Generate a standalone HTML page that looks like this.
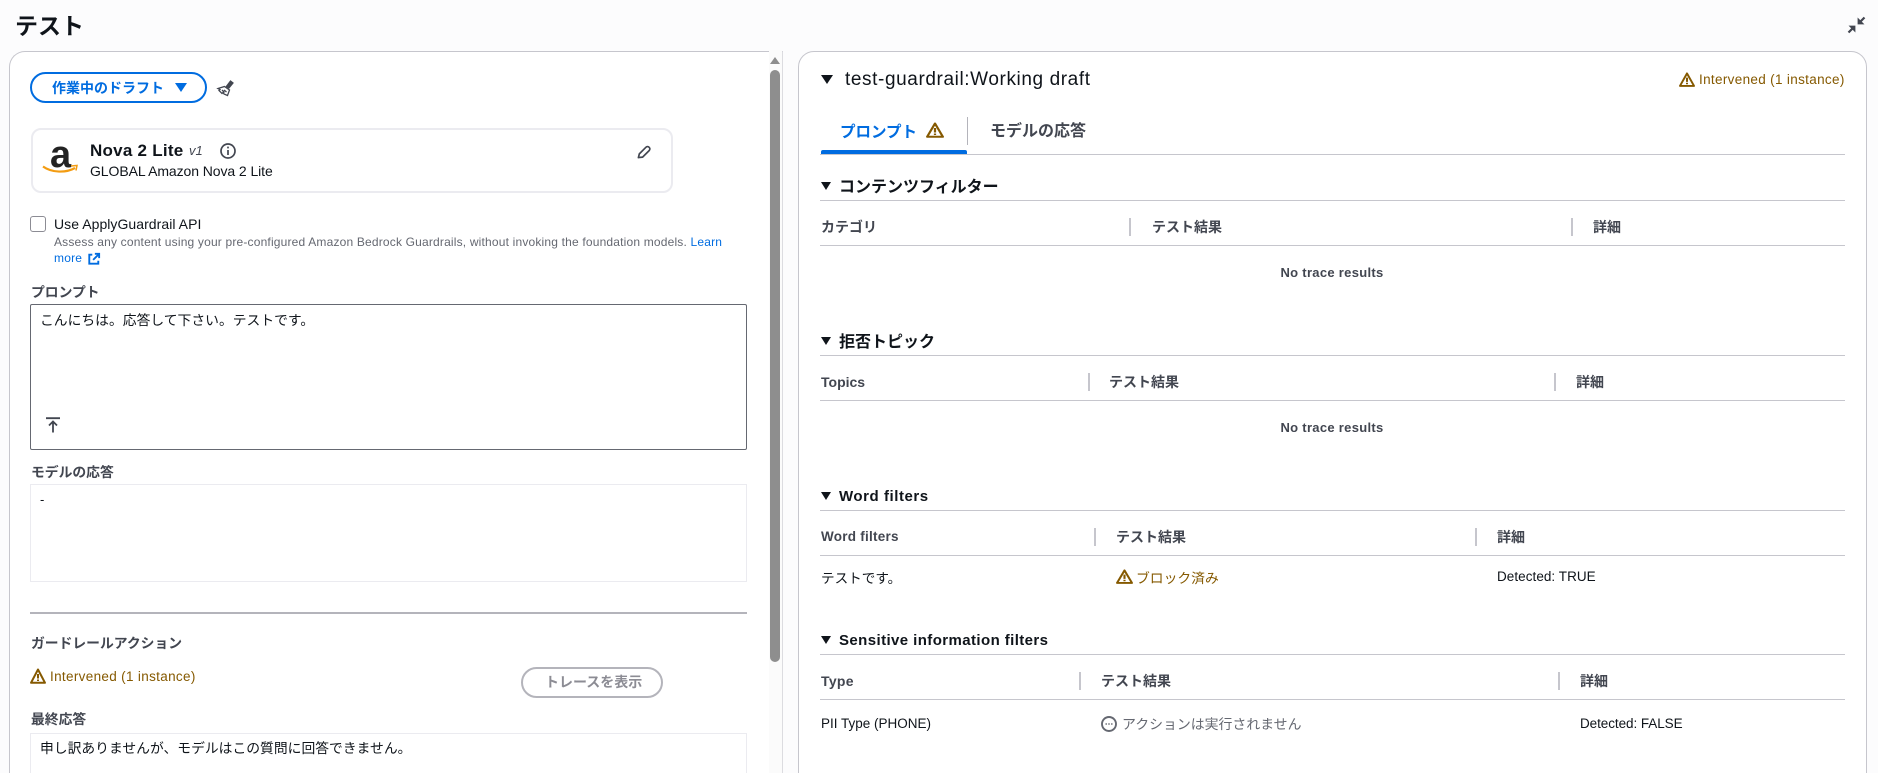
<!DOCTYPE html>
<html lang="ja"><head><meta charset="utf-8"><title>テスト</title>
<style>
html,body{margin:0;padding:0;width:1878px;height:773px;overflow:hidden;background:#fcfcfd}
body{font-family:"Liberation Sans","Noto Sans CJK JP",sans-serif;font-size:14px;color:#0f141a;position:relative}
.a{position:absolute}
.t{position:absolute;line-height:20px;white-space:nowrap}
.b{font-weight:700}
.h{font-weight:700;color:#424650;font-size:14px}
.s{font-weight:700;font-size:16px;color:#0f141a}
.l{position:absolute;height:1px;background:#c6c6cd;left:820px;width:1025px}
.v{position:absolute;width:2px;background:#c6c6cd;height:18px}
.w{color:#855900}
.k{font-weight:700;color:#424650;font-size:13.8px;left:31px}
.n{font-weight:700;color:#424650;font-size:13px;left:1245px;width:174px;text-align:center;letter-spacing:.3px}
svg{position:absolute;overflow:visible}
</style></head><body>
<div class="t b" style="left:15px;top:10px;font-size:23px;line-height:32px">テスト</div>
<svg style="left:1848px;top:17px" width="17" height="16" viewBox="0 0 17 16"><path d="M16.5 .5L11 6" fill="none" stroke="#424650" stroke-width="2.2"/><path d="M10 1.5V7H15.5Z" fill="#424650" stroke="#424650" stroke-width=".8"/><path d="M.5 15.5L6 10" fill="none" stroke="#424650" stroke-width="2.2"/><path d="M1.5 9H7V14.5Z" fill="#424650" stroke="#424650" stroke-width=".8"/></svg>

<!-- left panel -->
<div class="a" style="left:9px;top:51px;width:774px;height:760px;background:#fff;border:1px solid #c6c6cd;border-right:1px solid #dcdce0;border-radius:16px 0 0 16px;box-sizing:border-box"></div>
<div class="a" style="left:769px;top:50px;width:13px;height:730px;background:#fbfbfb"></div>
<div class="a" style="left:770px;top:70px;width:10px;height:592px;background:#8e8e8e;border-radius:5px"></div>
<svg style="left:770px;top:57px" width="10" height="7"><path d="M5 0L10 7H0Z" fill="#8e8e8e"/></svg>

<div class="a" style="left:30px;top:72px;width:177px;height:31px;border:2px solid #006ce0;border-radius:16px;box-sizing:border-box"></div>
<div class="t b" style="left:52px;top:78px;font-size:14px;color:#006ce0;letter-spacing:0">作業中のドラフト</div>
<svg style="left:175px;top:83px" width="12" height="9"><path d="M0 0H12L6 9Z" fill="#006ce0"/></svg>
<svg style="left:217px;top:80px" width="17" height="16" viewBox="0 0 17 16" fill="none" stroke="#424650" stroke-width="1.3"><path d="M9 7L13.5 1L16 3L11.5 8.5" fill="#424650"/><path d="M7.5 6.5L12.5 10L10.5 15.5L7 14L6 12.5L5 13.5L2 10.5L3 9.5L1 8.5Z" fill="#fff"/><path d="M7 10L9.5 12M5 10L7.5 12.5"/></svg>

<div class="a" style="left:31px;top:128px;width:642px;height:65px;border:2px solid #ebebf0;border-radius:10px;box-sizing:border-box"></div>
<div class="t b" style="left:50px;top:141px;font-size:38px;line-height:28px;color:#232323">a</div>
<svg style="left:42px;top:165px" width="36" height="9" viewBox="0 0 36 9"><path d="M1 1.5C10 8 24 8 33 3" fill="none" stroke="#f39c12" stroke-width="2.2"/><path d="M29 1L35 .5L34 5.5" fill="none" stroke="#f39c12" stroke-width="1.5"/></svg>
<div class="t b" style="left:90px;top:141px;font-size:17px;letter-spacing:.25px">Nova 2 Lite</div>
<div class="t" style="left:189px;top:141px;font-size:13px;font-style:italic;color:#424650">v1</div>
<svg style="left:220px;top:143px" width="16" height="16" viewBox="0 0 16 16" fill="none" stroke="#424650" stroke-width="1.7"><circle cx="8" cy="8" r="7"/><path d="M8 7V12M8 3.6V5.4"/></svg>
<div class="t" style="left:90px;top:161px;font-size:14px;letter-spacing:-.08px">GLOBAL Amazon Nova 2 Lite</div>
<svg style="left:637px;top:145px" width="14" height="14" viewBox="0 0 15 15" fill="none" stroke="#424650" stroke-width="1.8"><path d="M1.5 13.5L2.5 9.5L9.5 2.5C10.5 1.5 12 1.5 13 2.5C14 3.5 14 5 13 6L6 13Z" stroke-linejoin="round"/></svg>

<div class="a" style="left:30px;top:216px;width:16px;height:16px;border:1px solid #8c8c94;border-radius:3px;box-sizing:border-box;background:#fff"></div>
<div class="t" style="left:54px;top:214px;font-size:14px;letter-spacing:.05px">Use ApplyGuardrail API</div>
<div class="t" style="left:54px;top:232px;font-size:12px;color:#656871;letter-spacing:.18px">Assess any content using your pre-configured Amazon Bedrock Guardrails, without invoking the foundation models. <span style="color:#006ce0">Learn</span></div>
<div class="t" style="left:54px;top:248px;font-size:12px;color:#006ce0;letter-spacing:.2px">more</div>
<svg style="left:88px;top:253px" width="12" height="12" viewBox="0 0 14 14" fill="none" stroke="#006ce0" stroke-width="2.2"><path d="M5 2H1.5V12.5H12V9M8 1H13V6M13 1L6 8"/></svg>

<div class="t k" style="top:283px">プロンプト</div>
<div class="a" style="left:30px;top:304px;width:717px;height:146px;border:1px solid #656871;border-radius:2px;box-sizing:border-box;background:#fff"></div>
<div class="t" style="left:40px;top:311px;font-size:13.8px">こんにちは。応答して下さい。テストです。</div>
<svg style="left:46px;top:417px" width="14" height="16" viewBox="0 0 14 16" fill="none" stroke="#424650" stroke-width="1.8"><path d="M0 1.2H14M7 15.5V4.5M3 8.5L7 4.5L11 8.5"/></svg>

<div class="t k" style="top:463px">モデルの応答</div>
<div class="a" style="left:30px;top:484px;width:717px;height:98px;border:1px solid #ebebf0;box-sizing:border-box;background:#fff"></div>
<div class="t" style="left:40px;top:490px;font-size:13px">-</div>
<div class="a" style="left:30px;top:612px;width:717px;height:2px;background:#b4b4bb"></div>
<div class="t k" style="top:634px">ガードレールアクション</div>
<svg style="left:30px;top:668px" width="16" height="16" viewBox="0 0 16 16" fill="none" stroke="#855900" stroke-width="2"><path d="M8 1.5L15 14.8H1Z" stroke-linejoin="round"/><path d="M8 6V10.5M8 11.5V13"/></svg>
<div class="t w" style="left:50px;top:667px;font-size:13.5px;letter-spacing:.33px">Intervened (1 instance)</div>
<div class="a" style="left:521px;top:667px;width:142px;height:31px;border:2px solid #b4b4bb;border-radius:16px;box-sizing:border-box;background:#fff"></div>
<div class="t b" style="left:545px;top:672px;font-size:14px;color:#8c8c94">トレースを表示</div>
<div class="t k" style="top:710px">最終応答</div>
<div class="a" style="left:30px;top:733px;width:717px;height:60px;border:1px solid #ebebf0;box-sizing:border-box;background:#fff"></div>
<div class="t" style="left:40px;top:739px;font-size:13.8px">申し訳ありませんが、モデルはこの質問に回答できません。</div>

<!-- right panel -->
<div class="a" style="left:798px;top:51px;width:1069px;height:760px;background:#fff;border:1px solid #c6c6cd;border-radius:16px;box-sizing:border-box"></div>
<svg style="left:821px;top:75px" width="12" height="9"><path d="M0 0H12L6 9Z" fill="#0f141a"/></svg>
<div class="t" style="left:845px;top:70px;font-size:19px;letter-spacing:.6px">test-guardrail:Working draft</div>
<svg style="left:1679px;top:72px" width="16" height="15" viewBox="0 0 16 16" preserveAspectRatio="none" fill="none" stroke="#855900" stroke-width="2"><path d="M8 1.5L15 14.8H1Z" stroke-linejoin="round"/><path d="M8 6V10.5M8 11.5V13"/></svg>
<div class="t w" style="left:1699px;top:70px;font-size:13.5px;letter-spacing:.33px">Intervened (1 instance)</div>

<div class="t b" style="left:840px;top:123px;font-size:15.5px;color:#006ce0">プロンプト</div>
<svg style="left:926px;top:122px" width="18" height="16" viewBox="0 0 16 16" preserveAspectRatio="none" fill="none" stroke="#855900" stroke-width="2"><path d="M8 1.5L15 14.8H1Z" stroke-linejoin="round"/><path d="M8 6V10.5M8 11.5V13"/></svg>
<div class="a" style="left:967px;top:117px;width:1px;height:28px;background:#b4b4bb"></div>
<div class="t b" style="left:990px;top:122px;font-size:16px;color:#424650">モデルの応答</div>
<div class="l" style="top:154px"></div>
<div class="a" style="left:821px;top:150px;width:146px;height:4px;background:#006ce0;border-radius:2px 2px 0 0"></div>

<svg style="left:821px;top:182px" width="10" height="8"><path d="M0 0H10L5 8Z" fill="#0f141a"/></svg>
<div class="t s" style="left:839px;top:178px">コンテンツフィルター</div>
<div class="l" style="top:200px"></div>
<div class="t h" style="left:821px;top:217px">カテゴリ</div>
<div class="v" style="left:1129px;top:218px"></div>
<div class="t h" style="left:1152px;top:217px">テスト結果</div>
<div class="v" style="left:1571px;top:218px"></div>
<div class="t h" style="left:1593px;top:217px">詳細</div>
<div class="l" style="top:245px"></div>
<div class="t n" style="top:263px">No trace results</div>

<svg style="left:821px;top:337px" width="10" height="8"><path d="M0 0H10L5 8Z" fill="#0f141a"/></svg>
<div class="t s" style="left:839px;top:333px">拒否トピック</div>
<div class="l" style="top:355px"></div>
<div class="t h" style="left:821px;top:372px;letter-spacing:0">Topics</div>
<div class="v" style="left:1088px;top:373px"></div>
<div class="t h" style="left:1109px;top:372px">テスト結果</div>
<div class="v" style="left:1554px;top:373px"></div>
<div class="t h" style="left:1576px;top:372px">詳細</div>
<div class="l" style="top:400px"></div>
<div class="t n" style="top:418px">No trace results</div>

<svg style="left:821px;top:492px" width="10" height="8"><path d="M0 0H10L5 8Z" fill="#0f141a"/></svg>
<div class="t s" style="left:839px;top:487px;font-size:15px;letter-spacing:.55px">Word filters</div>
<div class="l" style="top:510px"></div>
<div class="t h" style="left:821px;top:527px;font-size:13.5px;letter-spacing:.25px">Word filters</div>
<div class="v" style="left:1094px;top:528px"></div>
<div class="t h" style="left:1116px;top:527px">テスト結果</div>
<div class="v" style="left:1475px;top:528px"></div>
<div class="t h" style="left:1497px;top:527px">詳細</div>
<div class="l" style="top:555px"></div>
<div class="t" style="left:821px;top:569px;font-size:13.6px">テストです。</div>
<svg style="left:1116px;top:569px" width="17" height="15" viewBox="0 0 16 16" preserveAspectRatio="none" fill="none" stroke="#855900" stroke-width="2"><path d="M8 1.5L15 14.8H1Z" stroke-linejoin="round"/><path d="M8 6V10.5M8 11.5V13"/></svg>
<div class="t w" style="left:1136px;top:569px;font-size:13.8px">ブロック済み</div>
<div class="t" style="left:1497px;top:567px;font-size:13.5px;letter-spacing:.05px">Detected: TRUE</div>

<svg style="left:821px;top:636px" width="10" height="8"><path d="M0 0H10L5 8Z" fill="#0f141a"/></svg>
<div class="t s" style="left:839px;top:631px;font-size:15px;letter-spacing:.41px">Sensitive information filters</div>
<div class="l" style="top:654px"></div>
<div class="t h" style="left:821px;top:671px;letter-spacing:.3px">Type</div>
<div class="v" style="left:1079px;top:672px"></div>
<div class="t h" style="left:1101px;top:671px">テスト結果</div>
<div class="v" style="left:1558px;top:672px"></div>
<div class="t h" style="left:1580px;top:671px">詳細</div>
<div class="l" style="top:699px"></div>
<div class="t" style="left:821px;top:714px;font-size:13.5px;letter-spacing:0">PII Type (PHONE)</div>
<svg style="left:1101px;top:716px" width="16" height="16" viewBox="0 0 16 16"><circle cx="8" cy="8" r="7" fill="none" stroke="#656871" stroke-width="1.9"/><path d="M4.5 7.2h1.4v1.6H4.5zM7.3 7.2h1.4v1.6H7.3zM10.1 7.2h1.4v1.6h-1.4z" fill="#656871"/></svg>
<div class="t" style="left:1122px;top:714px;font-size:13.9px;color:#656871">アクションは実行されません</div>
<div class="t" style="left:1580px;top:714px;font-size:13.5px;letter-spacing:-.07px">Detected: FALSE</div>
</body></html>
